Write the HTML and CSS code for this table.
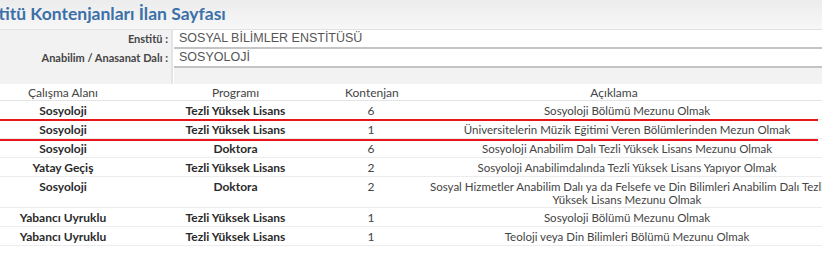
FILE: index.html
```html
<!DOCTYPE html>
<html lang="tr">
<head>
<meta charset="utf-8">
<title>Enstitü Kontenjanları İlan Sayfası</title>
<link rel="stylesheet" href="styles.css">
</head>
<body>
<div class="page">
  <div class="title-bar">
    <h1 class="title">Enstitü Kontenjanları İlan Sayfası</h1>
  </div>
  <div class="form">
    <div class="form-row">
      <div class="label">Enstitü :</div>
      <div class="value">SOSYAL BİLİMLER ENSTİTÜSÜ</div>
    </div>
    <div class="form-row">
      <div class="label">Anabilim / Anasanat Dalı :</div>
      <div class="value">SOSYOLOJİ</div>
    </div>
    <div class="form-row empty">
      <div class="label"></div>
      <div class="value"></div>
    </div>
  </div>
  <table class="quota">
    <colgroup>
      <col class="c-area"><col class="c-prog"><col class="c-num"><col class="c-desc">
    </colgroup>
    <thead>
      <tr><th>Çalışma Alanı</th><th>Programı</th><th>Kontenjan</th><th class="desc">Açıklama</th></tr>
    </thead>
    <tbody>
      <tr><td class="strong">Sosyoloji</td><td class="strong">Tezli Yüksek Lisans</td><td>6</td><td class="desc">Sosyoloji Bölümü Mezunu Olmak</td></tr>
      <tr><td class="strong">Sosyoloji</td><td class="strong">Tezli Yüksek Lisans</td><td>1</td><td class="desc">Üniversitelerin Müzik Eğitimi Veren Bölümlerinden Mezun Olmak</td></tr>
      <tr><td class="strong">Sosyoloji</td><td class="strong">Doktora</td><td>6</td><td class="desc">Sosyoloji Anabilim Dalı Tezli Yüksek Lisans Mezunu Olmak</td></tr>
      <tr><td class="strong">Yatay Geçiş</td><td class="strong">Tezli Yüksek Lisans</td><td>2</td><td class="desc">Sosyoloji Anabilimdalında Tezli Yüksek Lisans Yapıyor Olmak</td></tr>
      <tr class="tall"><td class="strong">Sosyoloji</td><td class="strong">Doktora</td><td>2</td><td class="desc">Sosyal Hizmetler Anabilim Dalı ya da Felsefe ve Din Bilimleri Anabilim Dalı Tezli Yüksek Lisans Mezunu Olmak</td></tr>
      <tr><td class="strong">Yabancı Uyruklu</td><td class="strong">Tezli Yüksek Lisans</td><td>1</td><td class="desc">Sosyoloji Bölümü Mezunu Olmak</td></tr>
      <tr><td class="strong">Yabancı Uyruklu</td><td class="strong">Tezli Yüksek Lisans</td><td>1</td><td class="desc">Teoloji veya Din Bilimleri Bölümü Mezunu Olmak</td></tr>
    </tbody>
  </table>
  <div class="highlight"></div>
</div>
</body>
</html>
```

FILE: styles.css
```css
html, body {
  margin: 0;
  padding: 0;
  background: #ffffff;
  overflow: hidden;
}

.page {
  position: relative;
  width: 822px;
  overflow: hidden;
  font-family: Lato, "Liberation Sans", sans-serif;
  color: #333333;
}

.title-bar {
  height: 29px;
  background: linear-gradient(#ececec, #f7f7f7);
  border-bottom: 1px solid #e2e2e2;
  display: flex;
  align-items: center;
}

.title {
  margin: -3px 0 0 -29px;
  font-size: 17.5px;
  font-weight: 700;
  color: #3c70a8;
  white-space: nowrap;
}

.form {
  display: flex;
  flex-direction: column;
}

.form-row {
  display: flex;
  height: 19px;
}

.form-row .label {
  width: 173px;
  flex: none;
  background: #f2f2f2;
  border-right: 2px solid #e4e4e4;
  text-align: right;
  font-size: 11px;
  font-weight: 700;
  color: #454545;
  line-height: 18px;
  padding-right: 3px;
  box-sizing: border-box;
}

.form-row .value {
  flex: 1;
  margin-left: 1px;
  background: #ffffff;
  border-bottom: 2px solid #c4c4c4;
  font-family: "Liberation Sans", Arial, sans-serif;
  font-size: 12.5px;
  color: #555555;
  line-height: 17px;
  padding-left: 5px;
}

.form-row.empty {
  height: 16px;
}

.form-row.empty .value {
  background: #f2f2f2;
  border-bottom: 0;
}

.quota {
  width: 857px;
  table-layout: fixed;
  border-collapse: collapse;
  font-size: 12px;
}

.c-area { width: 126px; }
.c-prog { width: 219px; }
.c-num { width: 52px; }
.c-desc { width: 460px; }

.quota th {
  font-weight: 400;
  color: #444444;
  height: 16px;
  padding: 0;
  text-align: center;
  border-bottom: 1px solid #e4e4e4;
  white-space: nowrap;
}

.quota th.desc {
  padding-right: 26px;
}

.quota td {
  height: 18px;
  padding: 0;
  text-align: center;
  color: #444444;
  border-bottom: 1px solid #ececec;
  line-height: 13px;
}

.quota td.desc {
  padding: 0 20px;
  font-size: 11.5px;
}

.quota tr.tall td {
  height: 31px;
  vertical-align: top;
  padding-top: 3px;
  box-sizing: border-box;
}

.quota td.strong {
  font-weight: 700;
  color: #2b2b2b;
}

.highlight {
  position: absolute;
  left: -2px;
  top: 119px;
  width: 820px;
  height: 18px;
  border-top: 2px solid #e8141b;
  border-bottom: 2px solid #e8141b;
  pointer-events: none;
}
```
